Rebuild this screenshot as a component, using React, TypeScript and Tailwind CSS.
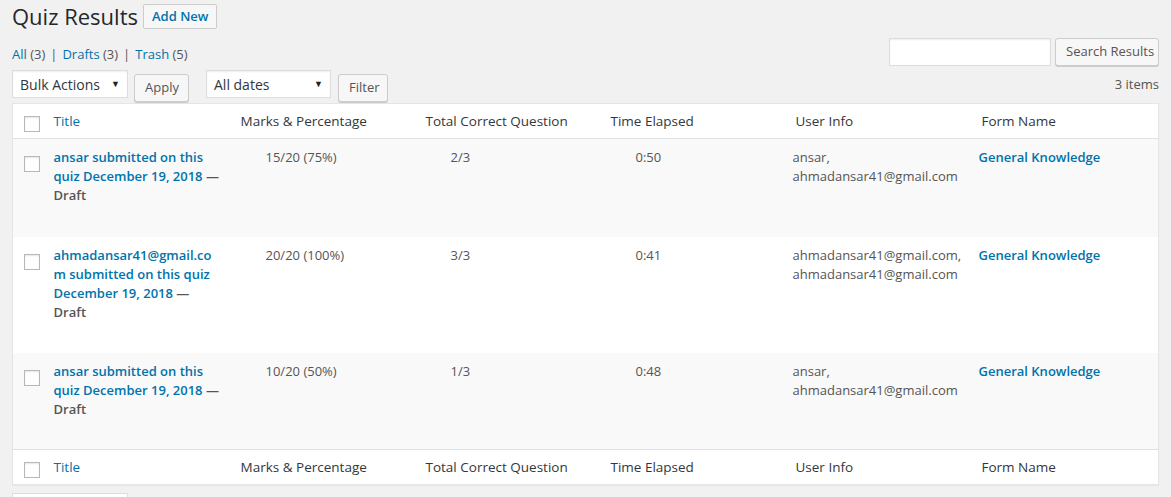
import React from "react";

type Row = {
  title: string[];
  marks: string;
  correct: string;
  time: string;
  user: string[];
  form: string;
  height: string;
  bg: string;
};

const rows: Row[] = [
  {
    title: ["ansar submitted on this", "quiz December 19, 2018"],
    marks: "15/20 (75%)",
    correct: "2/3",
    time: "0:50",
    user: ["ansar,", "ahmadansar41@gmail.com"],
    form: "General Knowledge",
    height: "h-[98px]",
    bg: "bg-[#f9f9f9]",
  },
  {
    title: ["ahmadansar41@gmail.co", "m submitted on this quiz", "December 19, 2018"],
    marks: "20/20 (100%)",
    correct: "3/3",
    time: "0:41",
    user: ["ahmadansar41@gmail.com,", "ahmadansar41@gmail.com"],
    form: "General Knowledge",
    height: "h-[116px]",
    bg: "bg-white",
  },
  {
    title: ["ansar submitted on this", "quiz December 19, 2018"],
    marks: "10/20 (50%)",
    correct: "1/3",
    time: "0:48",
    user: ["ansar,", "ahmadansar41@gmail.com"],
    form: "General Knowledge",
    height: "h-[97px]",
    bg: "bg-[#f9f9f9]",
  },
];

const Checkbox = () => (
  <span className="block h-4 w-4 border border-[#b4b9be] bg-white shadow-[inset_0_1px_2px_rgba(0,0,0,0.1)]" />
);

const Select = ({ label, width }: { label: string; width: string }) => (
  <div
    className={`flex h-[28px] items-center justify-between border border-[#ddd] bg-white pl-[7px] pr-[7px] text-[14px] text-[#32373c] shadow-[inset_0_1px_2px_rgba(0,0,0,0.07)] ${width}`}
  >
    <span>{label}</span>
    <span className="text-[9px] text-[#222]">▼</span>
  </div>
);

const Button = ({ children, className = "" }: { children: React.ReactNode; className?: string }) => (
  <button
    className={`h-[28px] whitespace-nowrap rounded-[3px] border border-[#ccc] bg-[#f7f7f7] px-[10px] text-[13px] text-[#555] shadow-[0_1px_0_#ccc] ${className}`}
  >
    {children}
  </button>
);

const HeaderRow = ({ top }: { top?: boolean }) => (
  <tr className={`h-[35px] bg-white ${top ? "border-b border-[#e1e1e1]" : "border-t border-[#e1e1e1]"}`}>
    <td className="pl-[11px] align-middle">
      <div className="pt-[5px]">
        <Checkbox />
      </div>
    </td>
    <th className="px-[10px] text-left text-[13.5px] font-normal text-[#0073aa]">Title</th>
    <th className="px-[10px] text-left text-[13.5px] font-normal text-[#32373c]">Marks &amp; Percentage</th>
    <th className="px-[10px] text-left text-[13.5px] font-normal text-[#32373c]">Total Correct Question</th>
    <th className="px-[10px] text-left text-[13.5px] font-normal text-[#32373c]">Time Elapsed</th>
    <th className="px-[10px] text-left text-[13.5px] font-normal text-[#32373c]">User Info</th>
    <th className="px-[10px] text-left text-[13.5px] font-normal text-[#32373c]">Form Name</th>
  </tr>
);

export default function App() {
  return (
    <div className="h-[497px] overflow-hidden bg-[#f1f1f1] px-[12px] font-['Open_Sans',sans-serif] text-[13px] text-[#444]">
      <div className="flex items-center gap-[5px] pt-[4px]">
        <h1 className="text-[22px] leading-[25px] font-normal text-[#23282d]">Quiz Results</h1>
        <button className="h-[25px] rounded-[2px] border border-[#ccc] bg-[#f7f7f7] px-[8px] text-[13px] font-semibold text-[#0073aa]">
          Add New
        </button>
      </div>

      <div className="flex items-start justify-between pt-[9px]">
        <div>
          <ul className="mt-[7px] flex text-[13px] leading-[18px] text-[#555]">
            <li>
              <a className="text-[#0073aa]">All</a> (3)<span className="mx-[5px]">|</span>
            </li>
            <li>
              <a className="text-[#0073aa]">Drafts</a> (3)<span className="mx-[5px]">|</span>
            </li>
            <li>
              <a className="text-[#0073aa]">Trash</a> (5)
            </li>
          </ul>
          <div className="mt-[7px] flex items-start">
            <Select label="Bulk Actions" width="w-[116px]" />
            <Button className="ml-[6px] mt-[4px] w-[55px] px-0">Apply</Button>
            <Select label="All dates" width="w-[125px] ml-[17px]" />
            <Button className="ml-[7px] mt-[4px] w-[50px] px-0">Filter</Button>
          </div>
        </div>
        <div className="flex flex-col items-end">
          <div className="flex items-center gap-[4px]">
            <input className="h-[28px] w-[162px] border border-[#ddd] bg-white shadow-[inset_0_1px_2px_rgba(0,0,0,0.07)] outline-none" />
            <Button className="w-[104px] px-0">Search Results</Button>
          </div>
          <div className="mt-[9px] text-[13px] text-[#555]">3 items</div>
        </div>
      </div>

      <table className="mt-[1px] w-[1146px] table-fixed border-collapse border border-[#e5e5e5] bg-white shadow-[0_1px_1px_rgba(0,0,0,0.04)]">
        <colgroup>
          <col className="w-[31px]" />
          <col className="w-[187px]" />
          <col className="w-[185px]" />
          <col className="w-[185px]" />
          <col className="w-[185px]" />
          <col className="w-[186px]" />
          <col className="w-[187px]" />
        </colgroup>
        <thead>
          <HeaderRow top />
        </thead>
        <tbody>
          {rows.map((r, i) => (
            <tr key={i} className={`${r.height} ${r.bg} align-top text-[13px] leading-[19px]`}>
              <td className="pl-[11px] pt-[17px]">
                <Checkbox />
              </td>
              <td className="px-[10px] pt-[9px]">
                <div className="font-semibold text-[#0073aa]">
                  {r.title.map((t, j) => (
                    <div key={j} className="whitespace-nowrap">
                      {t}
                      {j === r.title.length - 1 && <span className="text-[#555]"> —</span>}
                    </div>
                  ))}
                  <div className="text-[#555]">Draft</div>
                </div>
              </td>
              <td className="pl-[35px] pt-[9px] text-[#555]">{r.marks}</td>
              <td className="pl-[35px] pt-[9px] text-[#555]">{r.correct}</td>
              <td className="pl-[35px] pt-[9px] text-[#555]">{r.time}</td>
              <td className="pl-[7px] pt-[9px] text-[#555]">
                {r.user.map((u, j) => (
                  <div key={j}>{u}</div>
                ))}
              </td>
              <td className="pl-[7px] pt-[9px] font-semibold text-[#0073aa]">{r.form}</td>
            </tr>
          ))}
        </tbody>
        <tfoot>
          <HeaderRow />
        </tfoot>
      </table>

      <div className="mt-[8px] h-[28px] w-[116px] border border-[#ddd] bg-white" />
    </div>
  );
}
